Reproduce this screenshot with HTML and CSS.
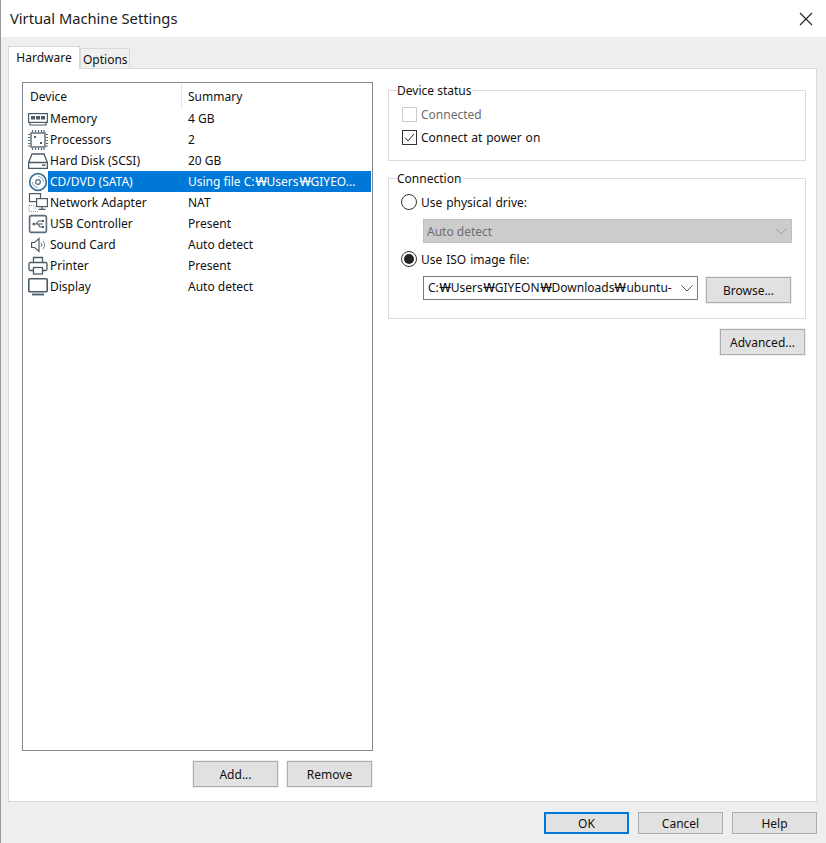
FILE: index.html
```html
<!DOCTYPE html>
<html lang="en">

<head>
    <meta charset="UTF-8">
    <title>Virtual Machine Settings</title>
    <link rel="stylesheet" href="styles.css">
</head>

<body>
    <div class="titlebar">
        <span class="title">Virtual Machine Settings</span>
        <svg class="close" width="14" height="14" viewBox="0 0 14 14"><path d="M1 1L13 13M13 1L1 13" stroke="#222" stroke-width="1.1" fill="none"/></svg>
    </div>

    <div class="tabs">
        <div class="tab active">Hardware</div>
        <div class="tab">Options</div>
    </div>

    <div class="pane">
        <div class="left">
            <div class="list">
                <div class="list-head">
                    <span class="head-device">Device</span>
                    <span class="head-summary">Summary</span>
                </div>

                <div class="row">
                    <svg class="icon" viewBox="0 0 20 20"><g fill="none" stroke="#4a5a66" stroke-width="1.2"><rect x="0.6" y="4.6" width="18.8" height="8.8"/><path d="M2 13.5v2.5h16v-2.5"/></g><g fill="#4a5a66"><rect x="3" y="7" width="4" height="3.5"/><rect x="8" y="7" width="4" height="3.5"/><rect x="13" y="7" width="4" height="3.5"/></g></svg>
                    <div class="cells"><span class="device">Memory</span><span class="summary">4 GB</span></div>
                </div>
                <div class="row">
                    <svg class="icon" viewBox="0 0 20 20"><rect x="3" y="3" width="14" height="14" fill="none" stroke="#4a5a66" stroke-width="1.3"/><path d="M4.5 0v2M7.5 0v2M10.5 0v2M13.5 0v2M16 0v2M4.5 18v2M7.5 18v2M10.5 18v2M13.5 18v2M16 18v2M0 4.5h2M0 7.5h2M0 10.5h2M0 13.5h2M0 16h2M18 4.5h2M18 7.5h2M18 10.5h2M18 13.5h2M18 16h2" stroke="#5d6b76" stroke-width="1.2"/><rect x="6" y="6" width="2" height="2" fill="#4a5a66"/><rect x="12" y="12" width="2" height="2" fill="#4a5a66"/></svg>
                    <div class="cells"><span class="device">Processors</span><span class="summary">2</span></div>
                </div>
                <div class="row">
                    <svg class="icon" viewBox="0 0 20 16"><path d="M4 1h12l3.4 8.5v5.8H.6V9.5z M.6 9.5h18.8" fill="none" stroke="#4a5a66" stroke-width="1.3"/><rect x="14" y="11.5" width="3.5" height="1.5" fill="#4a5a66"/></svg>
                    <div class="cells"><span class="device">Hard Disk (SCSI)</span><span class="summary">20 GB</span></div>
                </div>
                <div class="row selected">
                    <svg class="icon" viewBox="0 0 20 20"><g fill="none"><circle cx="10" cy="10" r="8.3" stroke="#3f7096" stroke-width="1.7"/><circle cx="10" cy="10" r="2.3" stroke="#4a6f8c" stroke-width="1.2"/><path d="M10 4.5a5.5 5.5 0 0 1 5.5 5.5" stroke="#8aa5b8"/><path d="M10 15.5a5.5 5.5 0 0 1-5.5-5.5" stroke="#8aa5b8"/></g></svg>
                    <div class="cells"><span class="device">CD/DVD (SATA)</span><span class="summary">Using file C:<span class="won">₩</span>Users<span class="won">₩</span>GIYEO...</span></div>
                </div>
                <div class="row">
                    <svg class="icon" viewBox="0 0 20 20"><g fill="none" stroke="#4a5a66" stroke-width="1.2"><rect x="1.5" y="0.6" width="11" height="8"/><rect x="8.6" y="5.6" width="10.8" height="8" fill="#fff"/><path d="M14 13.5v2.5M10.5 16.3h7"/><path d="M1 12.5h6M1 18.5h10M1 12.5v6M7 12.5v3" stroke="#9aa5ad" stroke-dasharray="1 1"/></g></svg>
                    <div class="cells"><span class="device">Network Adapter</span><span class="summary">NAT</span></div>
                </div>
                <div class="row">
                    <svg class="icon" viewBox="0 0 20 20"><rect x="1.6" y="1.6" width="16.8" height="16.8" rx="2" fill="none" stroke="#5d6b76" stroke-width="1.6"/><path d="M5 10h10M8 10l2.5-3H14M10 10l2 3h2" fill="none" stroke="#4a5a66" stroke-width="1.1"/><path d="M4 10l2.5-2v4z" fill="#4a5a66"/><rect x="14" y="6" width="2" height="2" fill="#4a5a66"/><rect x="14" y="12" width="2" height="2" fill="#4a5a66"/></svg>
                    <div class="cells"><span class="device">USB Controller</span><span class="summary">Present</span></div>
                </div>
                <div class="row">
                    <svg class="icon" viewBox="0 0 20 20"><path d="M3.6 7.5h3l4.4-4v13l-4.4-4h-3z" fill="none" stroke="#4a5a66" stroke-width="1.2"/><path d="M13 8a3 3 0 0 1 0 4M15 6a6 6 0 0 1 0 8" fill="none" stroke="#7f8c96" stroke-width="1.1"/></svg>
                    <div class="cells"><span class="device">Sound Card</span><span class="summary">Auto detect</span></div>
                </div>
                <div class="row">
                    <svg class="icon" viewBox="0 0 20 20"><g fill="none" stroke="#4a5a66" stroke-width="1.3"><path d="M5.5 6.5v-5h9v5"/><path d="M5 14.5H2.5A1.5 1.5 0 0 1 1 13V8a1.5 1.5 0 0 1 1.5-1.5h15A1.5 1.5 0 0 1 19 8v5a1.5 1.5 0 0 1-1.5 1.5H15"/><rect x="5.5" y="11.5" width="9" height="6.5"/></g></svg>
                    <div class="cells"><span class="device">Printer</span><span class="summary">Present</span></div>
                </div>
                <div class="row">
                    <svg class="icon" viewBox="0 0 20 18"><rect x="0.8" y="0.8" width="18.4" height="13" rx="1" fill="none" stroke="#4a5a66" stroke-width="1.6"/><path d="M4 16.5h12" stroke="#4a5a66" stroke-width="1.8"/></svg>
                    <div class="cells"><span class="device">Display</span><span class="summary">Auto detect</span></div>
                </div>
            </div>

            <div class="list-buttons">
                <button class="btn">Add...</button>
                <button class="btn">Remove</button>
            </div>
        </div>

        <div class="right">
            <fieldset class="group status">
                <legend>Device status</legend>
                <div class="check-row disabled">
                    <span class="checkbox"></span>
                    <span>Connected</span>
                </div>
                <div class="check-row">
                    <span class="checkbox"><svg width="13" height="13" viewBox="0 0 13 13"><path d="M2 6.5L5 10L11 3" stroke="#222" fill="none"/></svg></span>
                    <span>Connect at power on</span>
                </div>
            </fieldset>

            <fieldset class="group connection">
                <legend>Connection</legend>
                <div class="radio-row">
                    <span class="radio"></span>
                    <span class="radio-label">Use physical drive:</span>
                </div>
                <div class="select select-off">
                    <span class="select-text">Auto detect</span>
                    <svg width="12" height="7" viewBox="0 0 12 7"><path d="M0.5 0.5L6 6L11.5 0.5" stroke="#a0a0a0" fill="none"/></svg>
                </div>
                <div class="radio-row">
                    <span class="radio on"></span>
                    <span class="radio-label">Use ISO image file:</span>
                </div>
                <div class="iso-row">
                    <div class="select select-iso">
                        <span class="iso-path">C:<span class="won">₩</span>Users<span class="won">₩</span>GIYEON<span class="won">₩</span>Downloads<span class="won">₩</span>ubuntu-</span>
                        <svg width="12" height="7" viewBox="0 0 12 7"><path d="M0.5 0.5L6 6L11.5 0.5" stroke="#555" fill="none"/></svg>
                    </div>
                    <button class="btn">Browse...</button>
                </div>
            </fieldset>

            <div class="advanced-row">
                <button class="btn">Advanced...</button>
            </div>
        </div>
    </div>

    <div class="footer">
        <button class="btn default">OK</button>
        <button class="btn">Cancel</button>
        <button class="btn">Help</button>
    </div>
</body>

</html>
```

FILE: styles.css
```css
html, body {
    height: 100%;
}

body {
    margin: 0;
    background: #eeeeee;
    color: #111;
    font-family: "Noto Sans", "Noto Sans CJK KR", sans-serif;
    font-size: 12px;
    line-height: 16px;
    overflow: hidden;
    border-left: 1px solid #9a9a9a;
    box-sizing: border-box;
}

.titlebar {
    height: 37px;
    margin-left: -1px;
    padding: 0 13px 2px 10px;
    box-sizing: border-box;
    background: white;
    display: flex;
    justify-content: space-between;
    align-items: center;
}

.title {
    font-size: 14.7px;
    color: #1a1a1a;
}

.close {
    margin-top: 2px;
}

.tabs {
    display: flex;
    align-items: flex-end;
    height: 31px;
    padding-left: 7px;
    box-sizing: border-box;
}

.tab {
    height: 20px;
    padding: 0 2px;
    width: 50px;
    box-sizing: border-box;
    border: 1px solid #d9d9d9;
    border-bottom: none;
    background: #f0f0f0;
    text-align: center;
    line-height: 21px;
}

.tab.active {
    height: 23px;
    width: 72px;
    background: white;
    position: relative;
    top: 1px;
    line-height: 22px;
}

.pane {
    height: 734px;
    width: 809px;
    margin-left: 7px;
    box-sizing: border-box;
    border: 1px solid #d9d9d9;
    background: white;
    display: flex;
    padding: 13px 10px 14px 13px;
}

.left {
    width: 351px;
    display: flex;
    flex-direction: column;
}

.list {
    height: 669px;
    box-sizing: border-box;
    border: 1px solid #828790;
    padding: 0 1px;
}

.list-head {
    height: 25px;
    display: flex;
    align-items: center;
    margin-left: -1px;
}

.head-device {
    width: 159px;
    padding-left: 7px;
    box-sizing: border-box;
    border-right: 1px solid #e5e5e5;
    height: 24px;
    line-height: 25px;
}

.head-summary {
    padding-left: 6px;
    line-height: 25px;
    height: 24px;
}

.row {
    height: 21px;
    display: flex;
    align-items: center;
    padding-left: 4px;
}

.icon {
    width: 20px;
    height: 20px;
    flex: none;
}

.cells {
    display: flex;
    flex: 1;
    height: 21px;
    line-height: 21px;
    padding-left: 2px;
}

.device {
    width: 138px;
}

.selected .cells {
    background: #0078d7;
    color: white;
}

/* the backslash shows as a wide won sign on this system */
.won {
    display: inline-block;
    width: 12px;
    text-align: center;
    transform: scaleX(1.45);
}

.list-buttons {
    display: flex;
    justify-content: flex-end;
    gap: 9px;
    margin-top: 10px;
    padding-right: 1px;
}

.btn {
    width: 85px;
    height: 26px;
    padding: 1px 0 0;
    font: inherit;
    color: #111;
    background: #e1e1e1;
    border: 1px solid #adadad;
    box-shadow: 0 0 0 1px #f0f0f0;
}

.right {
    flex: 1;
    margin-left: 15px;
    margin-top: -1px;
}

.group {
    margin: 0;
    padding: 0;
    border: 1px solid #dcdcdc;
    min-width: 0;
}

.group legend {
    padding: 2px 1px 0 0;
    line-height: 16px;
}

.status {
    height: 80px;
    padding: 7px 0 0 13px;
    box-sizing: border-box;
}

.status legend {
    margin-left: -5px;
}

.check-row {
    display: flex;
    align-items: center;
    gap: 4px;
    height: 15px;
    margin-bottom: 8px;
    word-spacing: 0.7px;
}

.check-row.disabled {
    color: #6d6d6d;
    margin-top: 1px;
}

.checkbox {
    width: 15px;
    height: 15px;
    box-sizing: border-box;
    border: 1px solid #333;
    display: flex;
    align-items: center;
    justify-content: center;
    background: white;
}

.disabled .checkbox {
    border-color: #cccccc;
}

.connection {
    height: 150px;
    margin-top: 8px;
    padding: 7px 13px 0 12px;
    box-sizing: border-box;
}

.connection legend {
    margin-left: -4px;
}

.radio-row {
    display: flex;
    align-items: center;
    gap: 4px;
    height: 16px;
    word-spacing: 0.8px;
}

.radio-label {
    padding-top: 1px;
}

.radio {
    width: 16px;
    height: 16px;
    box-sizing: border-box;
    border: 1px solid #333;
    border-radius: 50%;
    display: flex;
    align-items: center;
    justify-content: center;
}

.radio.on::after {
    content: "";
    width: 10px;
    height: 10px;
    border-radius: 50%;
    background: #222;
}

.select {
    height: 24px;
    box-sizing: border-box;
    display: flex;
    align-items: center;
    justify-content: space-between;
    padding: 0 4px 0 3px;
}

.select-text {
    padding-top: 1px;
}

.select-off {
    margin: 9px 0 8px 22px;
    background: #cccccc;
    border: 1px solid #bfbfbf;
    color: #6d6d6d;
}

.iso-row {
    display: flex;
    align-items: flex-start;
    gap: 8px;
    margin-top: 9px;
    margin-left: 22px;
}

.select-iso {
    width: 275px;
    border: 1px solid #7a7a7a;
    background: white;
    padding-left: 4px;
}

.iso-path {
    white-space: nowrap;
    width: 249px;
}

.iso-row .btn {
    margin-top: 1px;
}

.advanced-row {
    display: flex;
    justify-content: flex-end;
    margin-top: 10px;
    padding-right: 1px;
}

.footer {
    display: flex;
    justify-content: flex-end;
    gap: 9px;
    padding: 10px 9px 0 0;
}

.footer .btn {
    height: 22px;
}

.footer .default {
    border: 2px solid #0078d7;
    box-shadow: none;
}
```
